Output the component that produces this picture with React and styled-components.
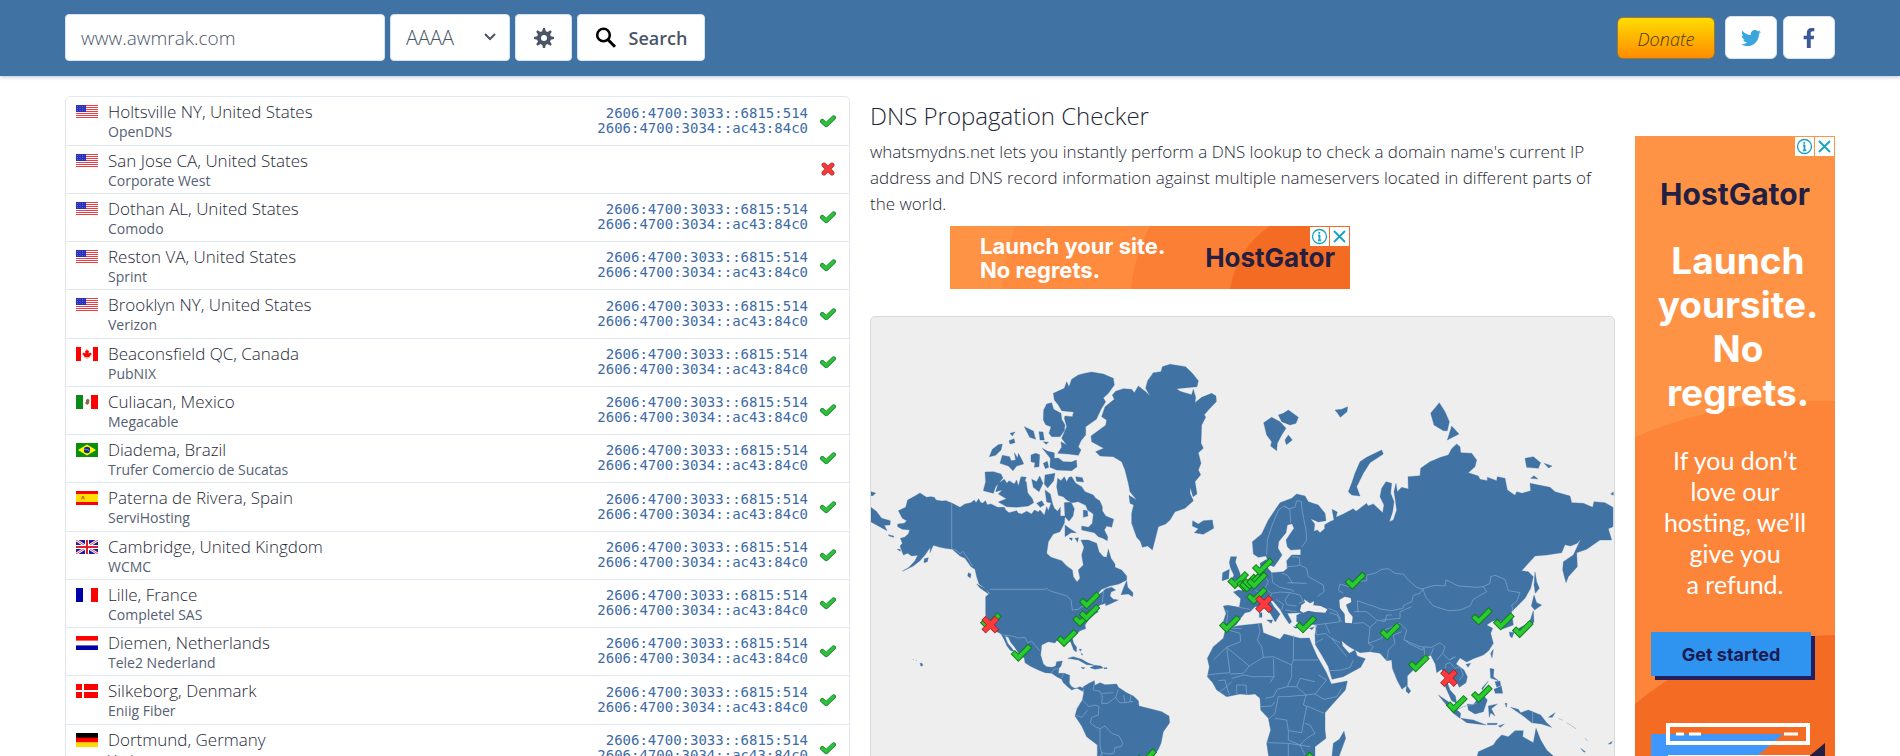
import React from "react";
import styled, { createGlobalStyle } from "styled-components";
import { FaTwitter, FaFacebookF } from "react-icons/fa";

const GlobalStyle = createGlobalStyle`
  *, *::before, *::after { box-sizing: border-box; }
  body {
    margin: 0;
    background: #fff;
    color: #1f2937;
    font-family: "Open Sans", "Noto Sans", sans-serif;
    font-size: 17px;
  }
`;

const Header = styled.header`
  display: flex;
  align-items: center;
  justify-content: space-between;
  padding: 14px 65px 15px;
  background: #4072a4;
  box-shadow: 0 1px 4px rgba(64, 80, 140, 0.35);
`;

const SearchForm = styled.form`
  display: flex;
  gap: 5px;
`;

const controlBox = `
  height: 47px;
  border: 1px solid #d5e2ef;
  border-radius: 4px;
  background: #fff;
  color: #4a5568;
  font-family: inherit;
`;

const DomainInput = styled.input`
  ${controlBox}
  width: 320px;
  padding: 0 15px;
  font-size: 19px;
  font-weight: 350;
`;

const SelectWrap = styled.div`
  position: relative;
  width: 120px;
`;

const TypeSelect = styled.select`
  ${controlBox}
  width: 100%;
  padding: 0 15px;
  font-size: 20px;
  font-weight: 350;
  appearance: none;
`;

const Chevron = styled.svg`
  position: absolute;
  right: 14px;
  top: 18px;
  pointer-events: none;
`;

const FormButton = styled.button`
  ${controlBox}
  display: flex;
  align-items: center;
  justify-content: center;
  gap: 12px;
  width: ${(p) => p.$width}px;
  font-size: 18px;
  font-weight: 600;
`;

const HeaderLinks = styled.nav`
  display: flex;
  align-items: center;
  gap: 6px;
`;

const DonateLink = styled.a`
  width: 98px;
  height: 42px;
  margin-right: 4px;
  border: 1px solid #9a7a2e;
  border-radius: 6px;
  background: linear-gradient(#ffdc00, #ff8c00);
  color: #4a3a13;
  font-size: 18px;
  font-style: italic;
  font-weight: 350;
  line-height: 42px;
  text-align: center;
  text-decoration: none;
`;

const SocialLink = styled.a`
  display: flex;
  align-items: center;
  justify-content: center;
  width: 52px;
  height: 43px;
  border: 1px solid #d5e2ef;
  border-radius: 6px;
  background: #fff;
  color: ${(p) => p.$color};
`;

const Page = styled.main`
  display: grid;
  grid-template-columns: minmax(0, 785fr) minmax(0, 745fr) 200px;
  column-gap: 20px;
  align-items: start;
  padding: 20px 65px;
`;

const ResultsFrame = styled.div`
  border: 1px solid #e2e8f0;
  border-radius: 5px;
`;

const Results = styled.table`
  width: 100%;
  border-collapse: collapse;
`;

const ResultRow = styled.tr`
  height: 48px;
  &:nth-child(4n + 5) { height: 49px; }
  & + & { border-top: 1px solid #e2e8f0; }
`;

const Cell = styled.td`
  padding: 0;
  vertical-align: ${(p) => p.$align || "middle"};
  width: ${(p) => p.$width || "auto"};
  text-align: ${(p) => (p.$end ? "right" : "left")};
`;

const FlagIcon = styled.svg`
  display: block;
  margin: 8px 0 0 10px;
`;

const Place = styled.div`
  padding-top: 4px;
  font-size: 17px;
  font-weight: 350;
  line-height: 22px;
`;

const Provider = styled.div`
  color: #566074;
  font-size: 14px;
  line-height: 18px;
`;

const Answer = styled.div`
  color: #3d6ba5;
  font-family: "DejaVu Sans Mono", monospace;
  font-size: 14px;
  line-height: 15px;
  white-space: nowrap;
`;

const StatusIcon = styled.svg`
  display: block;
  margin: 0 13px 0 auto;
`;

const Title = styled.h1`
  margin: 4px 0 7px;
  font-size: 24px;
  font-weight: 350;
  line-height: 32px;
`;

const Intro = styled.p`
  margin: 0 0 9px;
  font-size: 17px;
  font-weight: 350;
  line-height: 26px;
`;

const BannerAd = styled.aside`
  position: relative;
  display: flex;
  align-items: center;
  justify-content: space-between;
  width: 400px;
  height: 63px;
  margin: 0 0 27px 80px;
  padding: 0 15px 0 30px;
  overflow: hidden;
  background: #ff9345;
`;

const AdArt = styled.svg`
  position: absolute;
  inset: 0;
  width: 100%;
  height: 100%;
`;

const BannerCopy = styled.div`
  position: relative;
  color: #fff;
  font-family: "Inter", sans-serif;
  font-size: 22px;
  font-weight: 700;
  line-height: 24px;
`;

const Brand = styled.div`
  position: relative;
  color: #231f42;
  font-family: "Inter", sans-serif;
  font-size: ${(p) => p.$size}px;
  font-weight: 700;
  line-height: 32px;
`;

const AdBadges = styled.div`
  position: absolute;
  top: 1px;
  right: 1px;
  display: flex;
  gap: 1px;
`;

const AdBadge = styled.button`
  display: flex;
  width: 19px;
  height: 19px;
  padding: 0;
  border: 0;
  background: #fff;
`;

const SideAd = styled.aside`
  position: relative;
  display: flex;
  flex-direction: column;
  align-items: center;
  height: 660px;
  margin-top: 40px;
  padding-top: 42px;
  overflow: hidden;
  background: #ff9345;
  color: #fff;
  font-family: "Inter", sans-serif;
  text-align: center;
`;

const SideHeadline = styled.div`
  position: relative;
  margin-top: 29px;
  padding-left: 6px;
  font-size: 37px;
  font-weight: 700;
  line-height: 44px;
`;

const SideCopy = styled.p`
  position: relative;
  margin: 30px 0 0;
  font-family: "Lato", sans-serif;
  font-size: 25px;
  line-height: 31px;
`;

const SideButton = styled.button`
  position: relative;
  align-self: flex-start;
  width: 160px;
  height: 44px;
  margin: 32px 0 0 16px;
  padding: 0;
  border: 0;
  background: #2f93f0;
  box-shadow: 4px 4px 0 #231f5c;
  color: #1b1b50;
  font-family: inherit;
  font-size: 18px;
  font-weight: 700;
`;

const MapFrame = styled.figure`
  margin: 0;
  overflow: hidden;
  border: 1px solid #d9d9d9;
  border-radius: 5px;
  background: #eee;
`;

const MapDrawing = styled.svg`
  display: block;
  width: 100%;
  height: auto;
`;

/* Flags, each drawn on a 22 x 14 field */
const FLAGS = {
  us: (
    <>
      <path fill="#fff" d="M0 0h22v14H0z" />
      <path stroke="#e8404a" strokeWidth="1" d="M0 .5h22M0 2.5h22M0 4.5h22M0 6.5h22M0 8.5h22M0 10.5h22M0 12.5h22" />
      <path fill="#2730b8" d="M0 0h10v7H0z" />
      <path stroke="#7f88e8" strokeDasharray="1 1.5" strokeWidth=".7" d="M1 1.5h8M1 3.5h8M1 5.5h8" />
    </>
  ),
  ca: (
    <>
      <path fill="#fff" d="M0 0h22v14H0z" />
      <path fill="#f00" d="M0 0h5v14H0zM17 0h5v14h-5zM11 2l1 2 1-.5-.4 3L14.500 5.500l.5 1 1 .3-2.500 2.700.3 1-2.500-.4V12h-.6v-1.900l-2.500.4.3-1L6 6.800l1-.3.5-1 1.900 1-.4-3 1 .5z" />
    </>
  ),
  mx: (
    <>
      <path fill="#fff" d="M0 0h22v14H0z" />
      <path fill="#0a8a1a" d="M0 0h7v14H0z" />
      <path fill="#f00" d="M15 0h7v14h-7z" />
      <path fill="#8a6a4a" d="M10 5l2-1.500 1.500 2-.5 3-2 1.500-2-2 1-1z" />
    </>
  ),
  br: (
    <>
      <path fill="#0b8f0b" d="M0 0h22v14H0z" />
      <path fill="#ff0" d="M11 1.500L20 7l-9 5.500L2 7z" />
      <circle cx="11" cy="7" r="3.200" fill="#1a2a8a" />
      <path stroke="#9ab" strokeWidth=".8" fill="none" d="M8 6.300q3-.6 5.800 1.700" />
    </>
  ),
  es: (
    <>
      <path fill="#f00" d="M0 0h22v14H0z" />
      <path fill="#ffdf00" d="M0 3h22v8H0z" />
      <path fill="#d86a2a" d="M5 9l1-4h2l1 4-2-1.500z" />
    </>
  ),
  gb: (
    <>
      <path fill="#1c1c9c" d="M0 0h22v14H0z" />
      <path stroke="#fff" strokeWidth="2.600" d="M0 0l22 14M22 0L0 14" />
      <path stroke="#e04050" strokeWidth=".9" d="M0 0l22 14M22 0L0 14" />
      <path stroke="#fff" strokeWidth="4" d="M11 0v14M0 7h22" />
      <path stroke="#e0202c" strokeWidth="2" d="M11 0v14M0 7h22" />
    </>
  ),
  fr: (
    <>
      <path fill="#fff" d="M0 0h22v14H0z" />
      <path fill="#0000a8" d="M0 0h7v14H0z" />
      <path fill="#f00" d="M15 0h7v14h-7z" />
    </>
  ),
  nl: (
    <>
      <path fill="#fff" d="M0 0h22v14H0z" />
      <path fill="#f00" d="M0 0h22v4.600H0z" />
      <path fill="#0000a8" d="M0 9.400h22V14H0z" />
    </>
  ),
  dk: (
    <>
      <path fill="#f00" d="M0 0h22v14H0z" />
      <path stroke="#fff" strokeWidth="2" d="M7 0v14M0 7h22" />
    </>
  ),
  de: (
    <>
      <path d="M0 0h22v5H0z" />
      <path fill="#f00" d="M0 4.600h22v5H0z" />
      <path fill="#ffdc00" d="M0 9.400h22V14H0z" />
    </>
  ),
};

const SERVERS = [
  ["us", "Holtsville NY, United States", "OpenDNS", true],
  ["us", "San Jose CA, United States", "Corporate West", false],
  ["us", "Dothan AL, United States", "Comodo", true],
  ["us", "Reston VA, United States", "Sprint", true],
  ["us", "Brooklyn NY, United States", "Verizon", true],
  ["ca", "Beaconsfield QC, Canada", "PubNIX", true],
  ["mx", "Culiacan, Mexico", "Megacable", true],
  ["br", "Diadema, Brazil", "Trufer Comercio de Sucatas", true],
  ["es", "Paterna de Rivera, Spain", "ServiHosting", true],
  ["gb", "Cambridge, United Kingdom", "WCMC", true],
  ["fr", "Lille, France", "Completel SAS", true],
  ["nl", "Diemen, Netherlands", "Tele2 Nederland", true],
  ["dk", "Silkeborg, Denmark", "Eniig Fiber", true],
  ["de", "Dortmund, Germany", "Verizon", true],
];

const ADDRESSES = ["2606:4700:3033::6815:514", "2606:4700:3034::ac43:84c0"];

/* Western hemisphere outlines */
const WEST_LAND = [
  "M165 549L174 555 185 562 196 560 208 562 213 570 230 573 243 572 262 580 285 592 300 582 318 578 328 570 333 578 341 566 346 576 352 580 362 572 366 584 378 582 398 592 418 592 422 600 432 608 455 602 460 610 470 612 485 604 500 612 508 600 520 606 525 600 538 616 545 590 550 602 560 575 568 595 578 604 586 592 586 618 600 618 598 640 585 665 565 672 550 695 545 730 558 742 590 752 605 768 622 780 625 800 636 816 645 805 640 780 655 765 650 735 657 712 648 690 670 690 695 700 702 725 715 740 725 742 730 718 738 745 750 762 750 772 770 780 785 798 785 810 762 822 735 828 710 838 690 862 712 846 722 836 740 832 752 840 738 846 735 858 745 868 760 870 740 880 722 887 722 880 705 885 690 898 700 905 690 912 670 930 660 945 662 956 645 962 632 975 622 985 626 1000 635 1012 634 1026 626 1020 617 996 608 990 598 995 585 990 575 992 570 999 550 995 530 1005 527 1035 535 1062 545 1070 562 1072 572 1068 575 1055 592 1053 588 1068 582 1075 580 1090 598 1090 614 1096 613 1120 620 1130 632 1136 644 1130 655 1134 653 1144 635 1134 620 1140 608 1130 595 1118 590 1108 575 1100 560 1090 540 1088 520 1080 495 1068 480 1058 478 1045 458 1025 448 1010 438 998 430 982 420 978 428 1000 440 1014 447 1024 437 1022 426 1008 418 990 408 972 402 968 388 962 370 940 362 915 362 860 374 850 360 835 342 822 335 800 330 778 318 770 300 745 285 738 262 718 240 715 225 712 205 706 195 728 196 712 180 735 165 752 145 768 112 784 132 772 150 752 158 736 140 738 128 730 115 735 105 708 112 700 106 685 118 682 130 672 134 660 112 658 98 650 98 642 118 640 125 632 112 625 100 602 122 592 128 570 150 558z",
  "M578 505L588 512 598 500 605 515 612 502 620 500 632 520 650 530 660 545 685 555 692 565 704 572 712 590 712 602 722 618 746 628 740 652 725 648 718 660 728 680 727 692 712 684 700 680 688 668 668 664 650 660 650 648 670 652 682 640 685 612 668 600 662 586 640 575 622 578 605 570 595 560 580 556 575 530z",
  "M400 520L418 508 426 520 432 512 448 522 455 510 460 528 468 500 484 516 488 548 502 566 506 578 490 588 455 592 425 590 400 576 424 566 400 552 412 540 392 545z",
  "M360 486L385 485 408 492 414 504 392 530 385 550 355 542 362 515z",
  "M620 208L640 195 660 190 680 186 715 192 745 205 748 225 730 250 715 264 722 275 708 298 700 315 694 328 662 350 662 375 648 392 640 410 648 420 640 436 610 432 578 430 590 412 588 395 605 405 590 385 605 350 598 325 600 318 622 320 626 306 590 302 580 285 568 270 565 250 598 235 605 215 612 230z",
  "M545 282L560 278 566 298 588 310 590 328 600 345 598 362 585 380 560 380 552 370 558 350 542 344 535 330 536 300z",
  "M532 415L548 424 568 428 568 445 580 444 595 455 620 456 634 450 636 470 620 482 575 480 555 472 556 445z",
  "M373 440L382 418 400 404 412 402 408 420 392 436zM405 460L412 436 434 440 438 452 452 450 448 428 458 444 460 430 470 448 476 462 455 468 444 482 430 468zM498 435L512 430 524 434 522 470 508 472 510 458 498 455zM478 350L505 363 512 388 494 382zM522 365L534 366 538 390 525 390zM435 370l15-4-8 12zM432 392l15-6 3 12-15 4zM535 460l12-6 4 18-10 4zM535 395l16 2-8 6z",
  "M500 508L515 515 524 498 534 520 522 545 505 532zM540 495L570 490 566 512 548 534 538 522zM540 540L556 552 562 580 545 576zM515 580l15-8 8 12-12 8zM470 500l14 2-6 14zM598 578L618 576 628 596 624 618 612 634 600 620zM600 645L615 656 634 668 618 668 600 680zM655 600l12 2 2 16-14 4zM632 500L652 503 656 516 635 514zM612 684l10 0-2 8zM630 685l10-2-2 14z",
  "M768 854L778 828 785 812 788 832 804 848 803 860 790 852zM335 822L362 836 374 854 345 834zM310 788l8 4-2 12-8-6zM18 592L34 604 50 625 76 632 75 645 58 646 66 662 40 648 18 636zM18 545l14 4-8 8-6 0zM70 674l16 4 0 4-14-4zM178 746l12-3-3 12-10 3zM96 718l10 0 0 6zM165 1060l6 0 3 6-6 3zM152 1051l4 1M143 1048l4 1",
  "M848 212L865 188 888 185 892 170 915 163 962 170 982 190 1000 212 996 230 935 236 945 244 980 254 985 238 992 262 990 278 1010 262 1040 250 1053 258 1054 275 1030 300 1018 314 1022 322 1010 345 1008 400 1015 415 1000 428 1008 460 1000 480 1007 494 990 515 996 552 984 560 976 532 975 550 985 572 960 595 930 605 915 630 902 642 880 650 870 690 862 720 848 708 832 712 826 694 815 682 800 640 800 610 806 585 795 580 792 556 815 570 795 545 790 520 780 480 770 455 745 440 705 438 692 425 716 415 680 395 678 378 722 346 725 330 710 320 720 290 748 268 742 255 752 244 775 236 800 238 808 248 820 228 842 245 855 258 842 235z",
  "M983 632L1000 642 1015 632 1042 630 1046 655 1015 673 988 668 1000 656 982 648z",
  "M608 1045L625 1040 650 1048 668 1058 688 1066 665 1064 640 1050zM675 1073L690 1066 708 1068 714 1074 690 1078zM648 1072l12 1-6 4zM716 1073h10v3h-8zM642 1018l8 0-4 6zM648 1030l5 2-2 4z",
  "M655 1130L672 1120 688 1112 690 1126 705 1118 720 1124 755 1122 760 1132 785 1148 805 1158 820 1172 822 1188 850 1195 890 1205 912 1218 914 1238 895 1265 888 1300 880 1318 862 1345 845 1385 800 1450 770 1540 740 1610 722 1690 700 1690 692 1560 697 1400 697 1305 665 1280 650 1248 630 1218 636 1196 652 1170 656 1150z",
];

const WEST_BORDERS =
  "M260 580V716L276 722 285 732 294 724 312 750 322 768M374 838H540L545 835 556 843 580 850 605 858 618 870 622 900 640 898 650 890 668 885M412 975L440 978 460 984 480 982 488 998 500 994 512 1008 524 1022M560 1088L566 1078 580 1076M596 1092L590 1104M652 1170L672 1190 690 1185 702 1190 700 1215 680 1222 676 1238 690 1250 705 1256 720 1248 740 1270 762 1278 774 1300 768 1310 750 1312 746 1330 728 1332 712 1328 706 1338M705 1256V1310L712 1336M632 1216L650 1222 668 1200M688 1122L684 1140 705 1144 712 1158 710 1180 728 1180 752 1162 760 1138M752 1162L764 1178 780 1178 776 1155M780 1178L805 1174M798 1156L795 1174M712 1150L745 1148M716 838L712 878";

/* Eastern hemisphere outlines */
const EAST_LAND = [
  "M70 888L84 886 118 892 122 866 100 846 116 840 125 842 135 830 150 824 165 806 195 800 184 785 180 760 200 748 200 770 215 788 250 785 262 775 260 752 275 735 302 735 302 718 272 720 262 710 258 690 282 655 276 641 262 645 258 668 236 695 234 715 246 735 235 752 222 770 208 765 198 738 175 742 160 732 157 695 185 672 205 630 240 578 275 565 290 552 315 558 325 575 355 585 375 610 378 632 355 636 332 626 344 642 342 664 352 660 360 668 374 656 374 644 392 634 402 630 396 598 412 606 408 622 430 612 460 596 468 604 500 580 504 588 520 582 548 608 552 585 540 560 545 535 558 515 575 520 572 550 582 575 578 605 568 635 580 630 590 600 586 570 582 545 588 520 592 545 605 532 625 537 624 500 660 497 662 475 690 455 722 442 745 435 755 416 770 402 780 410 782 428 815 430 830 450 825 470 805 488 835 498 840 508 862 512 862 502 890 512 892 500 915 505 922 540 945 556 950 545 966 550 992 542 990 520 1050 532 1065 545 1110 558 1115 578 1150 580 1178 592 1182 575 1215 578 1239 592 1239 650 1225 656 1235 690 1200 690 1160 718 1130 728 1132 770 1105 800 1098 818 1088 780 1090 755 1120 735 1142 688 1132 700 1112 708 1095 704 1085 728 1040 735 1005 738 965 782 985 785 1000 800 992 835 975 865 950 890 934 905 938 930 940 945 905 958 905 935 888 930 875 935 860 945 878 955 872 970 880 1000 866 1022 850 1035 820 1046 800 1056 780 1044 768 1062 792 1080 802 1100 798 1118 778 1132 770 1115 757 1108 745 1092 740 1112 750 1140 766 1158 770 1180 755 1172 745 1150 736 1130 738 1105 725 1078 710 1088 706 1062 692 1036 672 1045 660 1062 640 1080 622 1098 622 1125 606 1138 592 1112 577 1075 575 1050 560 1052 540 1030 510 1025 480 1028 455 1015 440 1005 425 992 428 1008 448 1030 465 1020 472 1038 496 1046 482 1072 430 1100 396 1108 385 1070 365 1035 346 1004 345 975 350 945 328 942 310 946 290 935 290 916 305 908 262 910 275 935 268 942 252 918 240 898 220 874 208 868 222 890 240 912 226 936 212 912 190 890 165 890 150 905 135 908 118 930 108 945 80 952 70 935 78 910z",
  "M77 955L95 950 135 945 185 940 190 968 240 988 252 972 300 985 328 984 336 1004 352 1040 378 1085 394 1122 442 1113 436 1140 400 1180 375 1208 375 1260 378 1285 345 1310 345 1340 330 1400 290 1470 240 1480 215 1400 200 1300 212 1260 205 1225 182 1200 180 1165 165 1152 145 1154 120 1152 80 1160 50 1140 38 1118 22 1100 28 1070 22 1045 40 1010 70 985z",
  "M432 1264L437 1285 415 1345 396 1338 400 1300 418 1288z",
  "M92 740L110 740 106 756 120 790 122 808 90 814 102 796 92 775 88 758zM68 788L88 778 86 806 66 812z",
  "M191 338L215 322 240 335 258 355 245 375 232 400 230 422 212 408 215 395 200 375zM235 315L250 310 265 300 295 322 288 340 270 345 245 335zM255 390l10-15 12 15-18 14zM405 300l20-2 18-8-2 15-20 17-8-12zM445 545L455 520 465 490 480 455 500 442 545 420 550 432 510 458 490 490 470 530 480 558 455 555z",
  "M718 278L735 305 748 335 742 362 730 362 702 345 692 310zM755 348L777 372 742 390zM975 445L1000 440 1022 458 1015 475 980 472zM1032 460l24 8-10 6zM992 505l10-8 12 10zM1232 552l8-6v10z",
  "M1005 786L1010 815 1018 835 1006 850 1002 825zM1002 855L1010 878 1025 885 1004 900 994 888zM1000 902L1002 935 985 955 960 968 938 966 962 952 988 938zM928 966l14 2-6 16-6-6zM948 968l12 0-8 6zM872 1030l8-12-4 26zM798 1063l14-3-8 12zM870 1075L882 1078 880 1100 895 1112 872 1104zM882 1138L904 1128 908 1150 886 1150zM885 1115l15-2 2 14-12 4zM845 1135l20-22-18 26zM620 1125l12 18-6 8-8-8z",
  "M715 1155L745 1175 782 1210 780 1225 760 1210 735 1180zM782 1225L820 1230 858 1245 800 1238zM802 1182L820 1184 845 1150 862 1170 850 1205 825 1212 805 1200zM865 1188L892 1182 874 1196 885 1218 872 1208 868 1222zM862 1240h30l-2 4h-28zM895 1248l18-6-12 10zM915 1180l6 0-2 12z",
  "M932 1192L955 1198 962 1208 985 1200 1022 1215 1040 1238 1055 1252 1025 1242 995 1238 970 1218zM1045 1222l20-14-8 14zM1075 1225l14 6M1100 1238l28 18M1155 1284l8 10M1142 1315l14 10-4 2zM1225 1302l12-8-4 8z",
  "M832 1338L835 1325 880 1305 890 1290 905 1275 925 1280 945 1262 970 1262 968 1280 1000 1298 1008 1255 1022 1290 1040 1320 1060 1338 1085 1420 1060 1500 1000 1520 940 1470 850 1490 825 1400z",
  "M178 908h8v14h-8zM200 930l18 0-4 10zM280 950l20 2-14 3zM328 955l14-4-6 8z",
];

const SEAS = "M300 902L304 885 315 878 312 868 330 880 342 874 340 886 362 888 382 898 376 908 345 906 325 902 310 908zM418 870L434 860 452 864 454 876 438 884 446 906 458 920 456 940 435 938 434 912 420 894z";

const EAST_BORDERS =
  "M72 900L84 904 80 940M118 892L150 898M200 735L202 690 215 650 235 600 252 588 270 600 272 640M252 588L268 596 285 592 290 572 304 574 306 600 318 660 320 690 305 712M275 740L298 742 300 765 320 775 325 800 370 825 372 845 352 860M258 770L290 768 300 765M215 788L218 818 240 832 275 840 282 845M245 790L262 795 278 820M262 818L320 820M195 800L205 815 195 835 215 850 240 846 270 848 300 855 310 875 296 880M270 848L255 870 262 885 290 888M215 850L208 868M228 868L250 882 245 900M255 900L290 905M165 840L180 850 175 875M385 895L410 905 425 935M345 945L385 940 420 935 412 915 388 908M430 850L415 840 420 822 445 830 470 815 500 812 500 795 525 790 545 778 565 776 585 790 610 792 625 810 650 832 668 838 660 850 640 856 635 875 612 885 608 895 575 902 545 898 520 888 500 882 472 872 474 905 462 905M668 836L705 826 735 828 738 810 775 828 830 832 850 830 860 845 820 868 810 888 780 900 745 902 700 888 678 862 668 836M850 830L870 820 872 800 885 796 915 808 925 842 960 848 950 875 935 885 940 905M474 905L500 905 530 930 555 935 560 915 575 915M460 940L490 938 510 952 530 935M510 952L505 1000 520 1010 510 1025M505 1000L545 985 555 960 600 940 620 960 612 990 660 1010 695 1012 720 998 735 1010 728 1030 748 1050 768 1040M545 930L600 925 600 905 635 890M560 1052L565 1020 585 1000 580 975 605 965M620 990L625 1000 668 1020 670 1012M672 1012L675 1045M692 1036L700 1015M728 1030L710 1050M735 1075L738 1062 750 1058 765 1075 780 1070 790 1095 778 1110M750 1050L760 1040M345 945L350 975 375 970 395 985 420 998M375 940L390 970M345 1000L370 985M395 985L440 1040M425 1080L450 1072 460 1050M425 1080L385 1082M77 955L125 955M85 960L120 970 122 995 80 1012 40 1050M80 1012L90 1088 45 1092 22 1095M80 1012L148 1068 190 1042 185 1010 172 990 180 965 175 942M148 1068L130 1090 90 1092M190 1042L220 1040 275 1065 280 1050 281 975M280 1050H355M275 1065L275 1100 262 1130 232 1138 220 1160 195 1165M220 1045L222 1100 210 1118M132 1095L155 1100 210 1100 222 1100M95 1105L132 1095M110 1152V1125H138L140 1152M88 1155L80 1130 95 1115M55 1112L75 1110 80 1130 60 1145M262 1130L290 1130 318 1155 345 1152 380 1110 355 1095M290 1130L300 1105 345 1115M345 1152L372 1168 410 1160 425 1135M318 1155L310 1185 325 1190 372 1210M318 1155L260 1160 235 1160 225 1210 205 1228M225 1225L260 1230 265 1262 305 1268 312 1230 320 1190M265 1262V1290L300 1305 320 1285 345 1270 330 1245 315 1240M200 1298L265 1300 330 1310M265 1300V1338M300 1305L315 1335M182 1190L215 1188 225 1175M998 1205V1240M770 1200L790 1190 830 1180";

const Check = ({ x, y }) => (
  <g transform={`translate(${x} ${y})`} fill="none">
    <path stroke="#147a1e" strokeWidth="18" strokeLinecap="butt" d="M-18-18L-1-1 35-37" />
    <path stroke="#29cc2f" strokeWidth="12" d="M-16-16L-1-1 33-35" />
  </g>
);

const Cross = ({ x, y }) => (
  <g transform={`translate(${x} ${y})`} strokeLinecap="square">
    <path stroke="#94242a" strokeWidth="18" d="M-14-14L14 14M14-14L-14 14" />
    <path stroke="#ff3a3c" strokeWidth="14" d="M-14-14L14 14M14-14L-14 14" />
  </g>
);

const WEST_CHECKS = [[666, 887], [646, 940], [665, 925], [598, 1000], [461, 1044], [369, 950], [835, 1358]];
const EAST_CHECKS = [
  [106, 826], [133, 834], [142, 836], [150, 828], [180, 786], [163, 828], [162, 873], [81, 958],
  [310, 959], [458, 828], [562, 980], [648, 1076], [837, 935], [903, 950], [960, 973],
  [762, 1198], [837, 1167], [300, 1368],
];

function WorldMap() {
  return (
    <MapDrawing viewBox="0 0 2229 1560" role="img" aria-label="World map of DNS results">
      <g transform="translate(-18 -21)">
        <path fill="#4072a4" stroke="#4072a4" d={WEST_LAND.join("")} />
        <path fill="none" stroke="#86aace" strokeWidth="2" strokeLinejoin="round" d={WEST_BORDERS} />
      </g>
      <g transform="translate(987 -21)">
        <path fill="#4072a4" stroke="#4072a4" d={EAST_LAND.join("")} />
        <path fill="none" stroke="#86aace" strokeWidth="2" strokeLinejoin="round" d={EAST_BORDERS} />
        <path fill="#eee" d={SEAS} />
      </g>
      <g transform="translate(-18 -21)">
        {WEST_CHECKS.map(([x, y]) => <Check key={`${x}-${y}`} x={x} y={y} />)}
        <Cross x={376} y={944} />
      </g>
      <g transform="translate(987 -21)">
        {EAST_CHECKS.map(([x, y]) => <Check key={`${x}-${y}`} x={x} y={y} />)}
        <Cross x={192} y={882} />
        <Cross x={747} y={1104} />
      </g>
    </MapDrawing>
  );
}

function AdChoices() {
  return (
    <AdBadges>
      <AdBadge type="button" aria-label="Ad information">
        <svg width="19" height="19" viewBox="0 0 19 19" fill="none" stroke="#17a3c4">
          <circle cx="9.500" cy="9.500" r="7" strokeWidth="1.300" />
          <path strokeWidth="1.800" d="M9.500 8v5.500M8 8.500h2M8 13.300h3.200M9.300 5v1.800" />
        </svg>
      </AdBadge>
      <AdBadge type="button" aria-label="Close ad">
        <svg width="19" height="19" viewBox="0 0 19 19" stroke="#17a3c4" strokeWidth="1.800">
          <path d="M4 4l11 11M15 4L4 15" />
        </svg>
      </AdBadge>
    </AdBadges>
  );
}

function Status({ ok }) {
  return (
    <StatusIcon width="16" height="14" viewBox="0 0 16 14" fill="none" role="img" aria-label={ok ? "Found" : "Not found"}>
      {ok ? (
        <>
          <path stroke="#1d8a34" strokeWidth="4.600" strokeLinejoin="round" strokeLinecap="round" d="M2.300 7.300l3.900 3.600 7.500-7.300" />
          <path stroke="#2fc03c" strokeWidth="3" strokeLinecap="round" d="M2.500 7.300l3.700 3.400 7.300-7" />
        </>
      ) : (
        <>
          <path stroke="#c9252b" strokeWidth="4.800" strokeLinecap="round" d="M4 3l8 8M12 3l-8 8" />
          <path stroke="#f23c3c" strokeWidth="3.200" strokeLinecap="round" d="M4 3l8 8M12 3l-8 8" />
        </>
      )}
    </StatusIcon>
  );
}

export default function App() {
  return (
    <>
      <GlobalStyle />
      <Header>
        <SearchForm onSubmit={(e) => e.preventDefault()}>
          <DomainInput aria-label="Domain name" defaultValue="www.awmrak.com" />
          <SelectWrap>
            <TypeSelect aria-label="Record type" defaultValue="AAAA">
              <option>AAAA</option>
              <option>A</option>
              <option>CNAME</option>
              <option>MX</option>
            </TypeSelect>
            <Chevron width="12" height="10" viewBox="0 0 12 10" fill="none" stroke="#4a5568" strokeWidth="2">
              <path d="M1 2l5 5 5-5" />
            </Chevron>
          </SelectWrap>
          <FormButton type="button" aria-label="Options" $width={57}>
            <svg width="20" height="20" viewBox="0 0 20 20" fill="#4a5568">
              <path d="M3.940 6.500L2.220 3.640l1.420-1.420L6.500 3.940c.52-.3 1.100-.54 1.700-.7L9 0h2l.8 3.240c.6.16 1.180.4 1.700.7l2.860-1.720 1.420 1.420-1.720 2.860c.3.52.54 1.100.7 1.700L20 9v2l-3.240.8c-.16.6-.4 1.180-.7 1.700l1.720 2.860-1.420 1.420-2.860-1.720c-.52.3-1.100.54-1.700.7L11 20H9l-.8-3.240c-.6-.16-1.180-.4-1.700-.7l-2.860 1.720-1.420-1.420 1.720-2.860c-.3-.52-.54-1.100-.7-1.700L0 11V9l3.240-.8c.16-.6.4-1.180.7-1.700zM10 13a3 3 0 1 0 0-6 3 3 0 0 0 0 6z" />
            </svg>
          </FormButton>
          <FormButton type="submit" $width={128}>
            <svg width="22" height="22" viewBox="0 0 22 22" fill="none" stroke="#000" strokeWidth="2.600">
              <circle cx="8.500" cy="8" r="6.300" />
              <path strokeWidth="3" d="M12.800 12.500l7.200 7.300" />
            </svg>
            Search
          </FormButton>
        </SearchForm>
        <HeaderLinks>
          <DonateLink href="#donate">Donate</DonateLink>
          <SocialLink href="#twitter" aria-label="Twitter" $color="#3ba6dd"><FaTwitter size={20} /></SocialLink>
          <SocialLink href="#facebook" aria-label="Facebook" $color="#3b5998"><FaFacebookF size={20} /></SocialLink>
        </HeaderLinks>
      </Header>
      <Page>
        <ResultsFrame>
          <Results>
            <tbody>
              {SERVERS.map(([flag, place, provider, ok]) => (
                <ResultRow key={place}>
                  <Cell $width="42px" $align="top">
                    <FlagIcon width="22" height="14" viewBox="0 0 22 14" aria-hidden="true">{FLAGS[flag]}</FlagIcon>
                  </Cell>
                  <Cell $align="top">
                    <Place>{place}</Place>
                    <Provider>{provider}</Provider>
                  </Cell>
                  <Cell $end>
                    {ok && ADDRESSES.map((a) => <Answer key={a}>{a}</Answer>)}
                  </Cell>
                  <Cell $width="41px"><Status ok={ok} /></Cell>
                </ResultRow>
              ))}
            </tbody>
          </Results>
        </ResultsFrame>
        <section>
          <Title>DNS Propagation Checker</Title>
          <Intro>
            whatsmydns.net lets you instantly perform a DNS lookup to check a domain name's current IP
            address and DNS record information against multiple nameservers located in different parts of
            the world.
          </Intro>
          <BannerAd>
            <AdArt viewBox="0 0 400 63" preserveAspectRatio="none">
              <path fill="#ff8b3f" d="M65 0Q54 30 52 63H400V0z" />
              <path fill="#fb8035" d="M200 0Q184 30 181 63H400V0z" />
              <path fill="#f46b23" d="M320 0Q287 22 280 63H400V0z" />
            </AdArt>
            <BannerCopy>Launch your site.<br />No regrets.</BannerCopy>
            <Brand $size={26}>HostGator</Brand>
            <AdChoices />
          </BannerAd>
          <MapFrame><WorldMap /></MapFrame>
        </section>
        <SideAd>
          <AdArt viewBox="0 0 200 660" preserveAspectRatio="none">
            <path fill="#fd8539" d="M0 301Q90 262 200 265V660H0z" />
            <path fill="#f46b23" d="M0 568Q80 500 200 499V660H0z" />
            <path fill="#3f97fb" d="M16 598H148L120 622V660H16z" />
            <path fill="#231f42" d="M172 622L190 607V660H172z" />
            <path fill="none" stroke="#fff" strokeWidth="4" d="M33 589H173V607H33zM33 621H173V660" />
            <path stroke="#fff" strokeWidth="3" d="M41 598h8M54 598h12M149 598h14" />
          </AdArt>
          <Brand $size={30}>HostGator</Brand>
          <SideHeadline>Launch<br />yoursite.<br />No<br />regrets.</SideHeadline>
          <SideCopy>If you don’t<br />love our<br />hosting, we’ll<br />give you<br />a refund.</SideCopy>
          <SideButton type="button">Get started</SideButton>
          <AdChoices />
        </SideAd>
      </Page>
    </>
  );
}
